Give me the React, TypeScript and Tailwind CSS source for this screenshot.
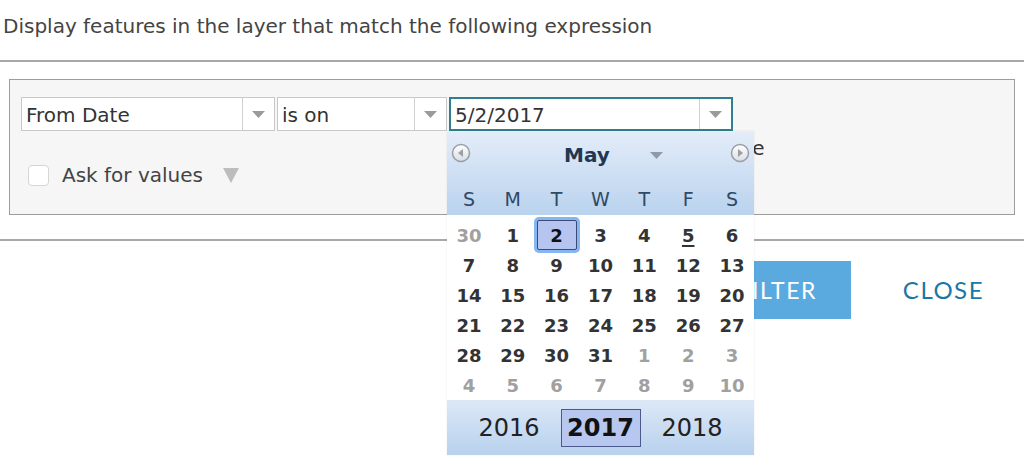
import React from 'react';

const weekdays = ['S', 'M', 'T', 'W', 'T', 'F', 'S'];

// [day, inMonth]
const weeks: [number, boolean][][] = [
  [[30, false], [1, true], [2, true], [3, true], [4, true], [5, true], [6, true]],
  [[7, true], [8, true], [9, true], [10, true], [11, true], [12, true], [13, true]],
  [[14, true], [15, true], [16, true], [17, true], [18, true], [19, true], [20, true]],
  [[21, true], [22, true], [23, true], [24, true], [25, true], [26, true], [27, true]],
  [[28, true], [29, true], [30, true], [31, true], [1, false], [2, false], [3, false]],
  [[4, false], [5, false], [6, false], [7, false], [8, false], [9, false], [10, false]],
];

function Caret({ className = '' }: { className?: string }) {
  return (
    <svg width="13" height="7" viewBox="0 0 13 7" className={className}>
      <path d="M0 0 H13 L6.5 7 Z" fill="currentColor" />
    </svg>
  );
}

function NavCircle({ dir }: { dir: 'prev' | 'next' }) {
  return (
    <svg width="20" height="20" viewBox="0 0 20 20">
      <defs>
        <linearGradient id={`nav-${dir}`} x1="0" y1="0" x2="0" y2="1">
          <stop offset="0" stopColor="#ffffff" />
          <stop offset="1" stopColor="#d9dde3" />
        </linearGradient>
      </defs>
      <circle cx="10" cy="10" r="8.5" fill={`url(#nav-${dir})`} stroke="#9a9ea5" strokeWidth="1.5" />
      {dir === 'prev' ? (
        <path d="M12 6 L7 10 L12 14 Z" fill="#9a9ea5" />
      ) : (
        <path d="M8 6 L13 10 L8 14 Z" fill="#9a9ea5" />
      )}
    </svg>
  );
}

function SelectBox({ label, width, accent = false }: { label: string; width: string; accent?: boolean }) {
  return (
    <div
      className={`flex h-[34px] ${width} items-stretch bg-white ${
        accent ? 'border-2 border-[#2f7f90]' : 'border border-[#c8c8c8]'
      }`}
    >
      <div className="flex flex-1 items-center pl-[4px] pt-[2px] text-[20px] text-[#333]">{label}</div>
      <div className="flex w-[32px] items-center justify-center border-l border-[#d0d0d0] text-[#9a9a9a]">
        <Caret />
      </div>
    </div>
  );
}

function Calendar() {
  return (
    <div className="absolute left-[447px] top-[131px] w-[307px] shadow-[0_0_2px_rgba(0,0,0,0.08)]">
      <div className="bg-gradient-to-b from-[#e4edf9] to-[#b9d2ee] pt-[11px] pb-[2px]">
        <div className="flex h-[22px] items-center px-[4px]">
          <NavCircle dir="prev" />
          <div className="ml-[93px] mt-[3px] text-[20px] font-bold text-[#22364f]">May</div>
          <Caret className="ml-[40px] mt-[5px] text-[#8f9aa6]" />
          <div className="ml-auto">
            <NavCircle dir="next" />
          </div>
        </div>
        <div className="mt-[23px] grid grid-cols-7 pb-[2px]">
          {weekdays.map((d, i) => (
            <div key={i} className="h-[24px] text-center text-[19px] leading-[24px] text-[#2e4a66]">
              {d}
            </div>
          ))}
        </div>
      </div>
      <div className="bg-white pt-[5px]">
        {weeks.map((week, wi) => (
          <div key={wi} className="grid h-[30px] grid-cols-7">
            {week.map(([day, inMonth], di) => {
              const selected = wi === 0 && di === 2;
              const today = wi === 0 && di === 5;
              return (
                <div key={di} className="flex items-center justify-center">
                  {selected ? (
                    <span className="flex h-[30px] w-[40px] items-center justify-center rounded-[2px] border border-[#3c4a78] bg-[#b6c5ef] text-[18px] font-bold text-[#111] ring-[3px] ring-[#86b6f2]">
                      {day}
                    </span>
                  ) : (
                    <span
                      className={`text-[18px] font-bold ${inMonth ? 'text-[#333]' : 'text-[#a0a0a0]'} ${
                        today ? 'underline decoration-2 underline-offset-[3px]' : ''
                      }`}
                    >
                      {day}
                    </span>
                  )}
                </div>
              );
            })}
          </div>
        ))}
      </div>
      <div className="flex h-[55px] items-center justify-center gap-[21px] bg-gradient-to-b from-[#dce8f7] to-[#b8d1ed]">
        <span className="text-[24px] text-[#222]">2016</span>
        <span className="flex h-[38px] w-[80px] items-center justify-center border border-[#4b5a8a] bg-[#b8c7ef] text-[24px] font-bold text-[#111]">
          2017
        </span>
        <span className="text-[24px] text-[#222]">2018</span>
      </div>
    </div>
  );
}

export default function App() {
  return (
    <div className="relative h-[465px] w-[1024px] overflow-hidden bg-white font-['DejaVu_Sans',sans-serif]">
      <div className="px-[3px] pt-[15px] text-[20px] leading-[22px] text-[#444]">
        Display features in the layer that match the following expression
      </div>
      <div className="mt-[23px] border-t-2 border-[#a8a8a8]" />

      <div className="mx-[9px] mt-[17px] h-[136px] border border-[#9c9c9c] bg-[#f6f6f6] pl-[11px] pt-[17px]">
        <div className="flex gap-[2px]">
          <SelectBox label="From Date" width="w-[254px]" />
          <SelectBox label="is on" width="w-[170px]" />
          <SelectBox label="5/2/2017" width="w-[284px]" accent />
        </div>
        <div className="mt-[6px] flex h-[22px] items-center pl-[673px] text-[20px] text-[#333]">Unique</div>
        <div className="mt-[6px] flex h-[20px] items-center">
          <div className="ml-[7px] h-[21px] w-[21px] rounded-[4px] border border-[#d6d6d6] bg-white" />
          <span className="ml-[13px] text-[20px] text-[#444]">Ask for values</span>
          <svg width="16" height="16" viewBox="0 0 16 16" className="ml-[20px]">
            <path d="M0 1 H16 L8 16 Z" fill="#bdbdbd" />
          </svg>
        </div>
      </div>

      <div className="mt-[24px] border-t-2 border-[#a8a8a8]" />

      <div className="mt-[20px] flex items-center justify-end pr-[40px]">
        <button className="h-[58px] bg-[#5baadf] px-[34px] font-['Lato',sans-serif] text-[23px] tracking-[1.5px] text-white">
          APPLY FILTER
        </button>
        <button className="ml-[52px] font-['Lato',sans-serif] text-[24px] tracking-[1.5px] text-[#1a77a6]">
          CLOSE
        </button>
      </div>

      <Calendar />
    </div>
  );
}
